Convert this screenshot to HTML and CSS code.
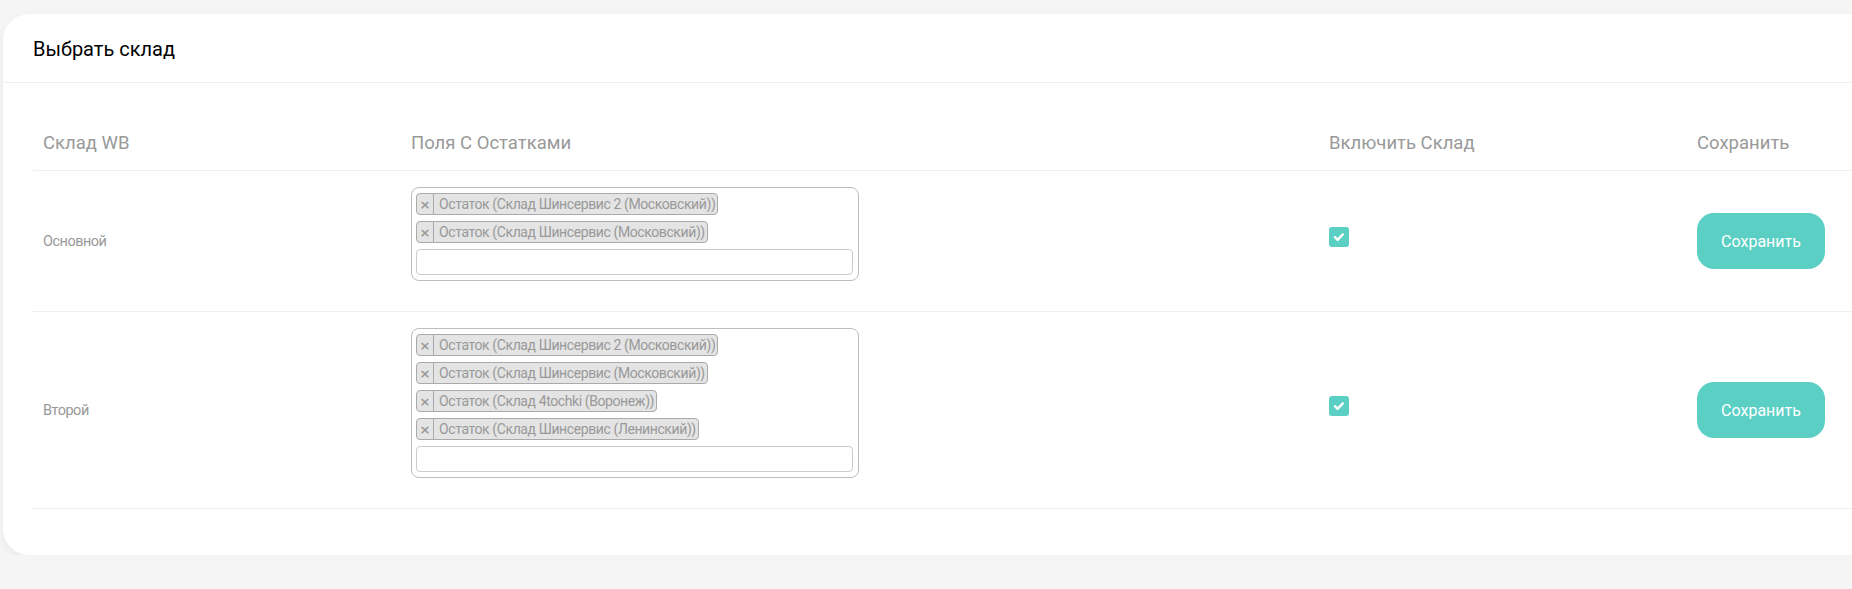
FILE: index.html
```html
<!DOCTYPE html>
<html lang="ru">
<head>
<meta charset="utf-8">
<title>Выбрать склад</title>
<link rel="stylesheet" href="styles.css">
</head>
<body>
<div class="card">
  <div class="card-header">Выбрать склад</div>
  <div class="card-body">
    <div class="table">
      <div class="row head">
        <div class="cell">Склад WB</div>
        <div class="cell">Поля С Остатками</div>
        <div class="cell">Включить Склад</div>
        <div class="cell">Сохранить</div>
      </div>
      <div class="row">
        <div class="cell label">Основной</div>
        <div class="cell">
          <div class="multi">
            <div class="tag"><span class="x">×</span><span class="t">Остаток (Склад Шинсервис 2 (Московский))</span></div>
            <div class="tag"><span class="x">×</span><span class="t">Остаток (Склад Шинсервис (Московский))</span></div>
            <div class="search"></div>
          </div>
        </div>
        <div class="cell"><span class="check"><svg viewBox="0 0 20 20" width="20" height="20"><path d="M6 10.2l2.6 2.6 5.2-5.4" fill="none" stroke="#fff" stroke-width="2.4" stroke-linecap="round" stroke-linejoin="round"/></svg></span></div>
        <div class="cell"><button class="btn">Сохранить</button></div>
      </div>
      <div class="row">
        <div class="cell label">Второй</div>
        <div class="cell">
          <div class="multi">
            <div class="tag"><span class="x">×</span><span class="t">Остаток (Склад Шинсервис 2 (Московский))</span></div>
            <div class="tag"><span class="x">×</span><span class="t">Остаток (Склад Шинсервис (Московский))</span></div>
            <div class="tag"><span class="x">×</span><span class="t">Остаток (Склад 4tochki (Воронеж))</span></div>
            <div class="tag"><span class="x">×</span><span class="t">Остаток (Склад Шинсервис (Ленинский))</span></div>
            <div class="search"></div>
          </div>
        </div>
        <div class="cell"><span class="check"><svg viewBox="0 0 20 20" width="20" height="20"><path d="M6 10.2l2.6 2.6 5.2-5.4" fill="none" stroke="#fff" stroke-width="2.4" stroke-linecap="round" stroke-linejoin="round"/></svg></span></div>
        <div class="cell"><button class="btn">Сохранить</button></div>
      </div>
    </div>
  </div>
</div>
</body>
</html>
```
FILE: styles.css
```css
html, body {
  margin: 0;
  padding: 0;
  overflow: hidden;
}
body {
  background: #f5f5f5;
  font-family: Roboto, "Liberation Sans", Arial, sans-serif;
  padding: 14px 0 0 3px;
}
.card {
  width: 2100px;
  background: #fff;
  border-radius: 26px;
  box-shadow: 0 4px 10px rgba(0, 0, 0, 0.05);
  padding-bottom: 46px;
}
.card-header {
  height: 68px;
  border-bottom: 1px solid #f0f0f0;
  padding-left: 30px;
  font-size: 20px;
  line-height: 70px;
  color: #000;
}
.card-body {
  padding-left: 30px;
}
.table {
  display: flex;
  flex-direction: column;
}
.row {
  display: grid;
  grid-template-columns: 368px 918px 368px 368px;
  align-items: center;
  border-bottom: 1px solid #efefef;
}
.row.head {
  align-items: end;
}
.cell {
  padding: 16px 10px;
}
.head .cell {
  padding: 47px 10px 14px;
  font-size: 18.5px;
  line-height: 26px;
  color: #999;
}
.label {
  font-size: 14.5px;
  letter-spacing: -0.5px;
  color: #999;
}
.multi {
  width: 448px;
  box-sizing: border-box;
  border: 1px solid #bdbdbd;
  border-radius: 8px;
  padding: 5px 5px 5px 4px;
  margin-bottom: 14px;
  display: flex;
  flex-direction: column;
  align-items: flex-start;
  gap: 6px;
}
.tag {
  height: 22px;
  box-sizing: border-box;
  display: flex;
  align-items: stretch;
  background: #e4e4e4;
  border: 1px solid #aaa;
  border-radius: 4px;
  color: #999;
}
.tag .x {
  width: 16px;
  border-right: 1px solid #aaa;
  display: flex;
  align-items: center;
  justify-content: center;
  font-size: 13px;
  font-weight: bold;
  color: #999;
  font-family: "DejaVu Sans", sans-serif;
}
.tag .t {
  padding: 0 2px 0 5px;
  font-size: 14px;
  line-height: 20px;
  letter-spacing: -0.4px;
  white-space: nowrap;
}
.search {
  width: 100%;
  height: 26px;
  box-sizing: border-box;
  border: 1px solid #ccc;
  border-radius: 4px;
}
.check {
  display: block;
  width: 20px;
  height: 20px;
  border-radius: 3px;
  background: #5ccfc5;
  margin-bottom: 8px;
}
.check svg {
  display: block;
}
.btn {
  display: block;
  width: 128px;
  height: 56px;
  border: 0;
  border-radius: 17px;
  background: #5ccfc5;
  color: #fff;
  font-family: Roboto, sans-serif;
  font-size: 16px;
  padding: 0;
}
```
